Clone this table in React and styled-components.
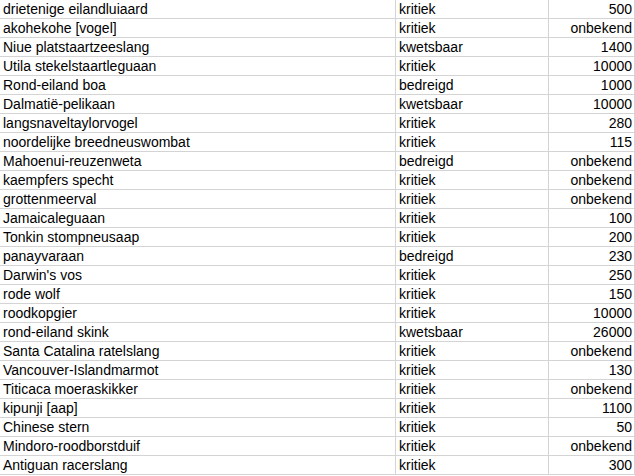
import styled, { createGlobalStyle } from "styled-components";

const rows = [
  ["drietenige eilandluiaard", "kritiek", "500"],
  ["akohekohe [vogel]", "kritiek", "onbekend"],
  ["Niue platstaartzeeslang", "kwetsbaar", "1400"],
  ["Utila stekelstaartleguaan", "kritiek", "10000"],
  ["Rond-eiland boa", "bedreigd", "1000"],
  ["Dalmatië-pelikaan", "kwetsbaar", "10000"],
  ["langsnaveltaylorvogel", "kritiek", "280"],
  ["noordelijke breedneuswombat", "kritiek", "115"],
  ["Mahoenui-reuzenweta", "bedreigd", "onbekend"],
  ["kaempfers specht", "kritiek", "onbekend"],
  ["grottenmeerval", "kritiek", "onbekend"],
  ["Jamaicaleguaan", "kritiek", "100"],
  ["Tonkin stompneusaap", "kritiek", "200"],
  ["panayvaraan", "bedreigd", "230"],
  ["Darwin's vos", "kritiek", "250"],
  ["rode wolf", "kritiek", "150"],
  ["roodkopgier", "kritiek", "10000"],
  ["rond-eiland skink", "kwetsbaar", "26000"],
  ["Santa Catalina ratelslang", "kritiek", "onbekend"],
  ["Vancouver-Islandmarmot", "kritiek", "130"],
  ["Titicaca moeraskikker", "kritiek", "onbekend"],
  ["kipunji [aap]", "kritiek", "1100"],
  ["Chinese stern", "kritiek", "50"],
  ["Mindoro-roodborstduif", "kritiek", "onbekend"],
  ["Antiguan racerslang", "kritiek", "300"],
];

const Global = createGlobalStyle`
  html, body { margin: 0; padding: 0; background: #fff; overflow: hidden; }
`;

const Sheet = styled.div`
  display: grid;
  grid-template-columns: 396px 153px 86px;
  grid-auto-rows: 19px;
  width: 635px;
  font-family: "Liberation Sans", Arial, sans-serif;
  font-size: 14px;
  color: #000;
`;

const Cell = styled.div`
  box-sizing: border-box;
  border-right: 1px solid #d4d4d4;
  border-bottom: 1px solid #d4d4d4;
  padding: 0 2px 0 3px;
  line-height: 18px;
  white-space: nowrap;
  overflow: hidden;
  text-align: ${({ $num }) => ($num ? "right" : "left")};
`;

export default function App() {
  return (
    <>
      <Global />
      <Sheet>
        {rows.map(([name, status, count], i) => (
          <Row key={i} name={name} status={status} count={count} />
        ))}
      </Sheet>
    </>
  );
}

function Row({ name, status, count }) {
  return (
    <>
      <Cell>{name}</Cell>
      <Cell>{status}</Cell>
      <Cell $num>{count}</Cell>
    </>
  );
}
